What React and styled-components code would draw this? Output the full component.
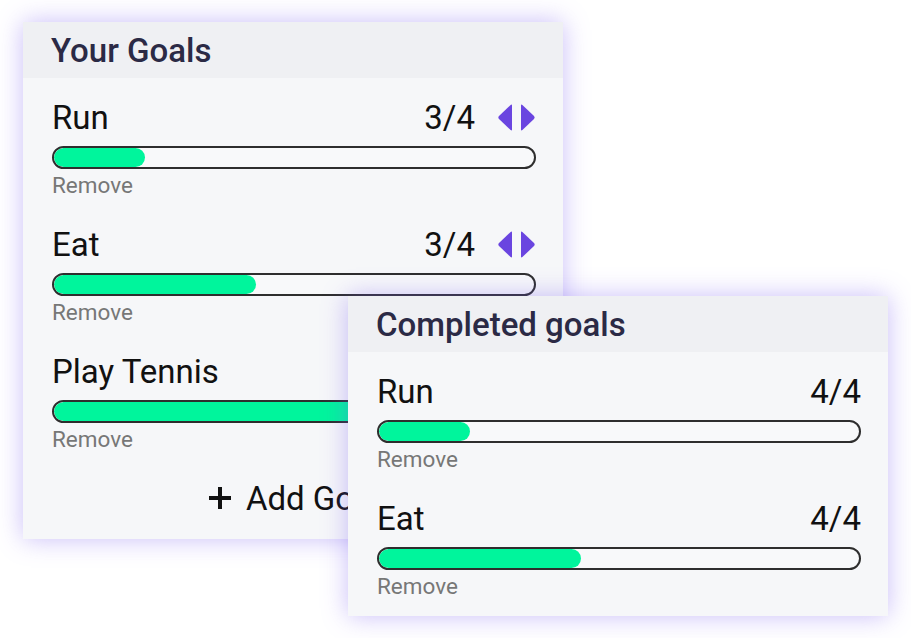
import React from "react";
import styled, { createGlobalStyle } from "styled-components";

const GlobalStyle = createGlobalStyle`
  html, body {
    margin: 0;
    padding: 0;
    background: #ffffff;
    font-family: Roboto, "Liberation Sans", sans-serif;
  }
  * { box-sizing: border-box; }
`;

const Stage = styled.div`
  position: relative;
  width: 911px;
  height: 638px;
  padding: 22px 0 0 23px;
`;

const Card = styled.section`
  width: 540px;
  background: #f6f7f9;
  box-shadow: 0 0 24px rgba(120, 90, 240, 0.4);
  display: flex;
  flex-direction: column;
`;

// second card sits over the first one
const FloatingCard = styled(Card)`
  position: absolute;
  left: 348px;
  top: 296px;
`;

const Header = styled.h2`
  margin: 0;
  height: 56px;
  display: flex;
  align-items: center;
  padding-left: 28px;
  background: #eff0f3;
  color: #2b2a45;
  font-size: 33px;
  font-weight: 500;
`;

const Body = styled.div`
  display: flex;
  flex-direction: column;
  gap: 31px;
  padding: 22px 27px ${(p) => p.$bottom}px 29px;
`;

const Goal = styled.div`
  display: flex;
  flex-direction: column;
`;

const TopRow = styled.div`
  display: flex;
  align-items: center;
  justify-content: space-between;
  height: 34px;
  font-size: 33px;
  color: #111;
`;

const Right = styled.div`
  display: flex;
  align-items: center;
  gap: 22px;
`;

const Arrows = styled.div`
  display: flex;
  gap: 5px;
  align-items: center;
`;

const Track = styled.div`
  margin-top: 12px;
  height: 23px;
  border: 2px solid #2e2e2e;
  border-radius: 12px;
  background: #f8f9fa;
  overflow: hidden;
`;

const Fill = styled.div`
  height: 100%;
  background: #00f59c;
  border-radius: 12px;
`;

const Remove = styled.div`
  margin-top: 5px;
  font-size: 22.5px;
  line-height: 22px;
  color: #777;
`;

const AddButton = styled.button`
  align-self: center;
  display: flex;
  align-items: center;
  gap: 14px;
  margin-top: 0;
  border: none;
  background: none;
  padding: 0;
  font-family: inherit;
  font-size: 33px;
  color: #111;
  height: 34px;
`;

const Tri = ({ dir }) => (
  <svg width="17" height="29" viewBox="0 0 17 29">
    {dir === "left" ? (
      <path d="M15 2.5 L15 26.5 Q15 28 13.6 27 L2 16 Q0.6 14.5 2 13 L13.6 2 Q15 1 15 2.5 Z" fill="#6a45e0" />
    ) : (
      <path d="M2 2.5 L2 26.5 Q2 28 3.4 27 L15 16 Q16.4 14.5 15 13 L3.4 2 Q2 1 2 2.5 Z" fill="#6a45e0" />
    )}
  </svg>
);

const GoalItem = ({ name, count, fill, arrows }) => (
  <Goal>
    <TopRow>
      <span>{name}</span>
      <Right>
        <span>{count}</span>
        {arrows && (
          <Arrows>
            <Tri dir="left" />
            <Tri dir="right" />
          </Arrows>
        )}
      </Right>
    </TopRow>
    <Track>
      <Fill style={{ width: fill }} />
    </Track>
    <Remove>Remove</Remove>
  </Goal>
);

export default function App() {
  return (
    <>
      <GlobalStyle />
      <Stage>
        <Card>
          <Header>Your Goals</Header>
          <Body $bottom={24}>
            <GoalItem name="Run" count="3/4" fill="19%" arrows />
            <GoalItem name="Eat" count="3/4" fill="42%" arrows />
            <GoalItem name="Play Tennis" count="3/4" fill="75%" arrows />
            <AddButton>
              <svg width="24" height="24" viewBox="0 0 24 24">
                <path d="M12 1 V23 M1 12 H23" stroke="#111" strokeWidth="4" />
              </svg>
              Add Goal
            </AddButton>
          </Body>
        </Card>
        <FloatingCard>
          <Header>Completed goals</Header>
          <Body $bottom={19}>
            <GoalItem name="Run" count="4/4" fill="19%" />
            <GoalItem name="Eat" count="4/4" fill="42%" />
          </Body>
        </FloatingCard>
      </Stage>
    </>
  );
}
